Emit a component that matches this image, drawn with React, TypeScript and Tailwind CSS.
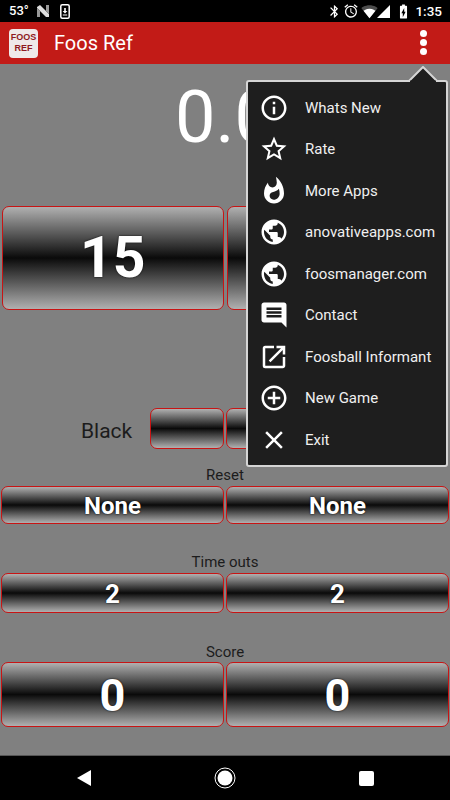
import React from "react";
import {
  MdInfoOutline,
  MdStarBorder,
  MdWhatshot,
  MdPublic,
  MdComment,
  MdOpenInNew,
  MdAddCircleOutline,
  MdClose,
  MdBluetooth,
  MdAccessAlarm,
  MdSignalWifi3Bar,
  MdBatteryChargingFull,
} from "react-icons/md";

const items: [React.ComponentType<{ size?: number; className?: string }>, string][] = [
  [MdInfoOutline, "Whats New"],
  [MdStarBorder, "Rate"],
  [MdWhatshot, "More Apps"],
  [MdPublic, "anovativeapps.com"],
  [MdPublic, "foosmanager.com"],
  [MdComment, "Contact"],
  [MdOpenInNew, "Foosball Informant"],
  [MdAddCircleOutline, "New Game"],
  [MdClose, "Exit"],
];

function Btn({ label, className, textClass }: { label?: string; className: string; textClass?: string }) {
  return (
    <div
      className={`flex items-center justify-center border border-[#c81414] rounded-[7px] bg-[linear-gradient(#b0b0b0,#0a0a0a_50%,#b0b0b0)] font-bold text-white [text-shadow:0_0_2px_#000] ${className} ${textClass ?? ""}`}
    >
      {label}
    </div>
  );
}

function Label({ text, className }: { text: string; className: string }) {
  return <div className={`text-center text-[15px] leading-[18px] text-[#1c1c1c] ${className}`}>{text}</div>;
}

export default function App() {
  return (
    <div className="relative w-[450px] h-[800px] overflow-hidden bg-[#808080] flex flex-col font-['Roboto',sans-serif]">
      {/* status bar */}
      <div className="h-[22px] bg-black flex items-center justify-between pl-[9px] pr-[8px] text-white text-[13px] shrink-0">
        <div className="flex items-center gap-[6px]">
          <span className="font-medium">53°</span>
          <svg width="14" height="14" viewBox="0 0 14 14" className="ml-[1px]">
            <path d="M1 3 L4 1 L13 10 V13 H10 L1 4Z" fill="#ddd" />
            <path d="M1 4 V13 H4 V7Z" fill="#999" />
            <path d="M10 1 H13 V10 L10 7Z" fill="#999" />
          </svg>
          <svg width="10" height="15" viewBox="0 0 10 15" className="ml-[4px]">
            <rect x="0.8" y="0.8" width="8.4" height="13.4" rx="1.5" fill="none" stroke="#fff" strokeWidth="1.5" />
            <path d="M4.2 4 H5.8 V7 H7.4 L5 9.6 L2.6 7 H4.2Z M2.8 10.4 H7.2 V11.4 H2.8Z" fill="#fff" />
          </svg>
        </div>
        <div className="flex items-center">
          <MdBluetooth size={15} />
          <MdAccessAlarm size={16} className="ml-[1px]" />
          <MdSignalWifi3Bar size={17} className="ml-[2px]" />
          <svg width="13" height="13" viewBox="0 0 13 13" className="ml-[-1px]">
            <path d="M13 0 V13 H0Z" fill="#fff" />
          </svg>
          <MdBatteryChargingFull size={17} className="ml-[5px]" />
          <span className="ml-[3px] font-medium text-[13.5px]">1:35</span>
        </div>
      </div>

      {/* app bar */}
      <div className="h-[42px] bg-[#c21b17] flex items-center pl-[9px] shrink-0">
        <div className="w-[29px] h-[29px] rounded-[4px] bg-[#efe9e9] flex flex-col items-center justify-center text-[#8e1a22] font-bold text-[9px] leading-[11px] font-['Liberation_Sans',sans-serif]">
          <span>FOOS</span>
          <span>REF</span>
        </div>
        <span className="ml-[16px] text-white text-[20px]">Foos Ref</span>
      </div>

      {/* content */}
      <div className="flex-1 flex flex-col px-[1px]">
        <div className="h-[142px] pt-[12px] text-center text-white text-[72px] leading-[84px] shrink-0">0.0</div>

        <div className="grid grid-cols-2 gap-[3px] px-[1px]">
          <Btn label="15" className="h-[104px]" textClass="text-[57px]" />
          <Btn className="h-[104px]" />
        </div>

        <div className="mt-[98px] flex items-center h-[41px]">
          <div className="w-[149px] pl-[80px] pt-[6px] text-[21px] text-[#1c1c1c]">Black</div>
          <Btn className="w-[74px] h-[41px]" />
          <Btn className="w-[74px] h-[41px] ml-[2px]" />
          <Btn className="w-[74px] h-[41px] ml-[2px]" />
        </div>

        <Label text="Reset" className="mt-[17px]" />
        <div className="grid grid-cols-2 gap-[2px] mt-[2px]">
          <Btn label="None" className="h-[38px] pt-[2px]" textClass="text-[24px]" />
          <Btn label="None" className="h-[38px] pt-[2px]" textClass="text-[24px]" />
        </div>

        <Label text="Time outs" className="mt-[29px]" />
        <div className="grid grid-cols-2 gap-[2px] mt-[2px]">
          <Btn label="2" className="h-[40px] pt-[2px]" textClass="text-[26px]" />
          <Btn label="2" className="h-[40px] pt-[2px]" textClass="text-[26px]" />
        </div>

        <Label text="Score" className="mt-[30px]" />
        <div className="grid grid-cols-2 gap-[2px] mt-[1px]">
          <Btn label="0" className="h-[65px] pt-[3px]" textClass="text-[45px]" />
          <Btn label="0" className="h-[65px] pt-[3px]" textClass="text-[45px]" />
        </div>
      </div>

      {/* nav bar */}
      <div className="h-[45px] bg-black grid grid-cols-3 items-center border-t border-[#555] px-[13.5px] shrink-0">
        <svg width="14" height="16" viewBox="0 0 14 16" className="justify-self-center">
          <path d="M14 0 V16 L0 8Z" fill="#fff" />
        </svg>
        <svg width="22" height="22" viewBox="0 0 22 22" className="justify-self-center">
          <circle cx="11" cy="11" r="10" fill="none" stroke="#fff" strokeWidth="1" />
          <circle cx="11" cy="11" r="7.5" fill="#fff" />
        </svg>
        <div className="w-[15px] h-[15px] rounded-[2px] bg-white justify-self-center" />
      </div>

      {/* three dots */}
      <div className="absolute left-[420px] top-[30px] flex flex-col gap-[2px]">
        <div className="w-[7px] h-[7px] rounded-full bg-white" />
        <div className="w-[7px] h-[7px] rounded-full bg-white" />
        <div className="w-[7px] h-[7px] rounded-full bg-white" />
      </div>

      {/* popup menu */}
      <div className="absolute left-[246px] top-[80px] w-[202px] h-[387px] bg-[#1e1e1e] border-2 border-[#d5d5d5] rounded-[3px] pt-[5px] flex flex-col">
        {items.map(([Icon, label], i) => (
          <div key={i} className="h-[41.5px] flex items-center shrink-0">
            <Icon size={30} className="ml-[11px] text-white shrink-0" />
            <span className="ml-[16px] text-[15px] text-[#f0f0f0] whitespace-nowrap">{label}</span>
          </div>
        ))}
      </div>
      <svg width="30" height="16" viewBox="0 0 30 16" className="absolute left-[408px] top-[66px]">
        <path d="M1 15 L15 1 L29 15" fill="#1e1e1e" stroke="#d5d5d5" strokeWidth="2" />
        <rect x="2" y="14.6" width="26" height="2" fill="#1e1e1e" />
      </svg>
    </div>
  );
}
